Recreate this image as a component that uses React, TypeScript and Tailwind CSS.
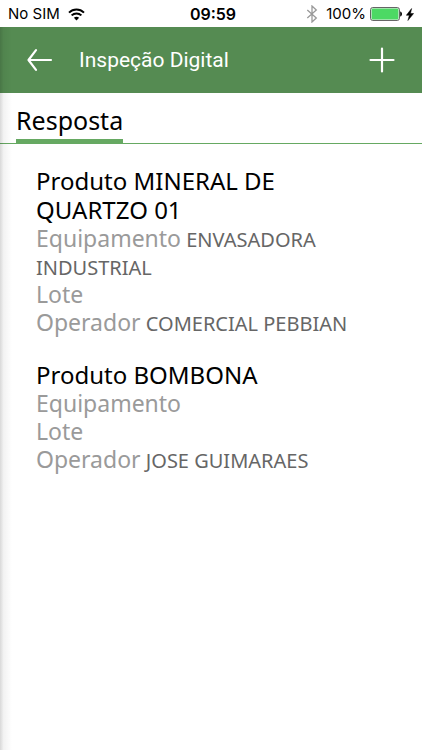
import React from "react";

type Inspection = {
  product: string;
  equipment: string;
  lot: string;
  operator: string;
};

const inspections: Inspection[] = [
  {
    product: "MINERAL DE QUARTZO 01",
    equipment: "ENVASADORA INDUSTRIAL",
    lot: "",
    operator: "COMERCIAL PEBBIAN",
  },
  { product: "BOMBONA", equipment: "", lot: "", operator: "JOSE GUIMARAES" },
];

function StatusBar() {
  return (
    <div className="grid h-[27px] grid-cols-[1fr_auto_1fr] items-center pr-1 pl-2 pt-px font-['Inter',sans-serif] text-[15px] leading-5 text-black">
      <div className="flex items-center gap-2">
        <span>No SIM</span>
        <svg width="17" height="13" viewBox="0 0 17 13" fill="none" stroke="#000" strokeWidth="2" aria-hidden="true">
          <path d="M1 4.6C5.2.4 11.8.4 16 4.6" />
          <path d="M3.6 7.4c2.8-2.7 7-2.7 9.8 0" />
          <path d="M8.5 12.4 5.9 9.8c1.5-1.4 3.7-1.4 5.2 0Z" fill="#000" stroke="none" />
        </svg>
      </div>
      <span className="text-[16px] font-semibold">09:59</span>
      <div className="flex items-center justify-end pr-1">
        <svg width="12" height="18" viewBox="0 0 12 18" fill="none" stroke="#999" strokeWidth="1.3" aria-hidden="true">
          <path d="m1.3 5 9 8L6 17V1l4.300 4-9 8" />
        </svg>
        <span className="ml-2">100%</span>
        <svg className="ml-1" width="32" height="14" viewBox="0 0 32 14" aria-hidden="true">
          <rect x=".6" y=".6" width="28.800" height="12.800" rx="2" fill="#fff" stroke="#555" />
          <rect x="1.600" y="1.600" width="26.800" height="10.800" rx="1" fill="#4cd964" />
          <path d="M30.200 4.500c2.400.6 2.400 4.400 0 5Z" fill="#000" />
        </svg>
        <svg className="ml-1" width="8" height="13" viewBox="0 0 8 13" aria-hidden="true">
          <path d="M5.600.5.300 7.300h3L1.900 12.500l5.700-7H4.500Z" fill="#000" stroke="#000" strokeWidth=".5" />
        </svg>
      </div>
    </div>
  );
}

function Header() {
  return (
    <header className="flex h-[66px] items-center bg-[#558b52] pr-6 pl-[26px] text-white">
      <button type="button" aria-label="Voltar" className="mr-[25px]">
        <svg width="28" height="24" viewBox="0 0 28 24" fill="none" stroke="#fff" strokeWidth="2.200" strokeLinecap="round" strokeLinejoin="round">
          <path d="M25 12H2.500M10 2.200 2.500 12l7.500 9.800" />
        </svg>
      </button>
      <h1 className="flex-1 font-['Roboto',sans-serif] text-[21px] leading-7 font-normal">Inspeção Digital</h1>
      <button type="button" aria-label="Adicionar">
        <svg width="32" height="28" viewBox="0 0 32 28" fill="none" stroke="#fff" strokeWidth="2.200" strokeLinecap="round">
          <path d="M16 2.500v23M4.500 14h23" />
        </svg>
      </button>
    </header>
  );
}

function Field({ label, value }: { label: string; value: string }) {
  return (
    <p className="text-[23px] leading-7 text-[#9a9a9a]">
      {label}
      {value && <span className="text-[20px] leading-5 text-[#666]"> {value}</span>}
    </p>
  );
}

export default function App() {
  return (
    <div className="relative min-h-screen bg-white font-['Noto_Sans',sans-serif]">
      <StatusBar />
      <div className="pointer-events-none absolute top-[27px] bottom-0 left-0 w-3 bg-linear-to-r from-black/15 via-black/5 via-30% to-transparent" />
      <Header />
      <main>
        <div className="flex border-b border-[#66a962] px-4 pt-2.5">
          <h2 className="-mb-px border-b-5 border-[#66a962] pb-0.5 text-[25px] leading-[34px] text-black">Resposta</h2>
        </div>
        <ul className="space-y-6 pt-[22px] pr-16 pl-9">
          {inspections.map((item) => (
            <li key={item.product}>
              <h3 className="text-[24px] leading-[29px] text-black">Produto {item.product}</h3>
              <Field label="Equipamento" value={item.equipment} />
              <Field label="Lote" value={item.lot} />
              <Field label="Operador" value={item.operator} />
            </li>
          ))}
        </ul>
      </main>
    </div>
  );
}
